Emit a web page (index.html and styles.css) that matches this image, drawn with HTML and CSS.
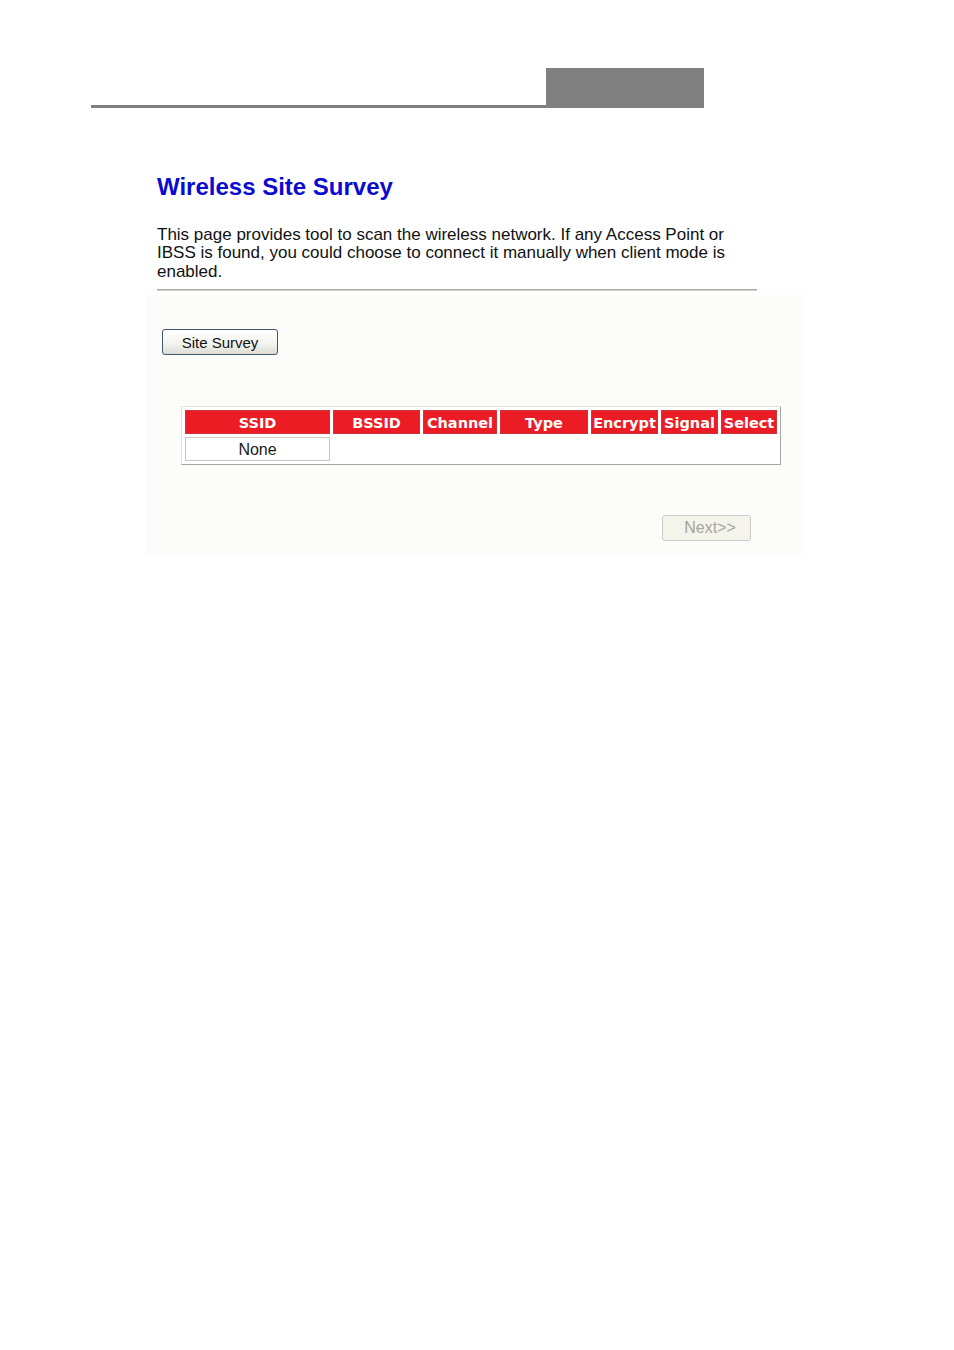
FILE: index.html
```html
<!DOCTYPE html>
<html lang="en">
<head>
<meta charset="utf-8">
<title>Wireless Site Survey</title>
<link rel="stylesheet" href="styles.css">
</head>
<body>
<header class="topbar">
  <div class="topbar-line"></div>
  <div class="topbar-box"></div>
</header>
<main class="page">
  <section class="intro">
    <h1 class="title">Wireless Site Survey</h1>
    <p class="desc">This page provides tool to scan the wireless network. If any Access Point or IBSS is found, you could choose to connect it manually when client mode is enabled.</p>
    <div class="rule"></div>
  </section>
  <form class="panel">
    <button type="button" class="btn-survey">Site Survey</button>
    <table class="survey">
      <thead>
        <tr>
          <th class="c-ssid">SSID</th>
          <th class="c-bssid">BSSID</th>
          <th class="c-channel">Channel</th>
          <th class="c-type">Type</th>
          <th class="c-encrypt">Encrypt</th>
          <th class="c-signal">Signal</th>
          <th class="c-select">Select</th>
        </tr>
      </thead>
      <tbody>
        <tr>
          <td class="none">None</td>
          <td class="empty" colspan="6"></td>
        </tr>
      </tbody>
    </table>
    <div class="actions">
      <button type="button" class="btn-next" disabled>Next&gt;&gt;</button>
    </div>
  </form>
</main>
</body>
</html>
```
FILE: styles.css
```css
html, body {
  margin: 0;
  padding: 0;
  background: #ffffff;
}
body {
  font-family: "Liberation Sans", Arial, sans-serif;
  color: #111111;
}
.topbar {
  display: flex;
  align-items: flex-end;
  margin: 68px 0 0 91px;
}
.topbar-line {
  width: 455px;
  height: 3px;
  background: #808080;
}
.topbar-box {
  width: 158px;
  height: 40px;
  background: #808080;
}
.page {
  margin-left: 146px;
  width: 657px;
}
.intro {
  padding-left: 11px;
}
.title {
  margin: 65px 0 0 0;
  font-family: "Liberation Sans", Arial, sans-serif;
  font-weight: bold;
  font-size: 24px;
  line-height: 28px;
  color: #0a0ad0;
}
.desc {
  margin: 25px 0 0 0;
  width: 600px;
  font-size: 17px;
  line-height: 18.4px;
  color: #111111;
}
.rule {
  margin-top: 8px;
  width: 600px;
  height: 1px;
  border-top: 1px solid #a8a8a0;
  background: #d4d4cc;
}
.panel {
  margin-top: 4px;
  padding: 34px 52px 13px 16px;
  background: #fcfcfa;
  display: flex;
  flex-direction: column;
  align-items: flex-start;
}
.btn-survey {
  box-sizing: border-box;
  width: 116px;
  height: 26px;
  padding: 0;
  border: 1px solid #3e5873;
  border-radius: 3px;
  background: linear-gradient(#ffffff, #f2f2ee 60%, #dcdcd4);
  font-family: "Liberation Sans", Arial, sans-serif;
  font-size: 15px;
  color: #111111;
}
.survey {
  margin: 51px 0 0 19px;
  width: 600px;
  border-collapse: separate;
  border-spacing: 3px;
  border: 1px solid;
  border-color: #e4e4dc #a8a8a0 #a8a8a0 #e4e4dc;
  background: #ffffff;
  table-layout: fixed;
}
.survey th {
  box-sizing: border-box;
  height: 24px;
  padding: 1px 0 0 0;
  background: #ec1c24;
  border: 1px solid #d0353a;
  color: #ffffff;
  font-family: "DejaVu Sans", Verdana, sans-serif;
  font-weight: bold;
  font-size: 14.5px;
  text-align: center;
  white-space: nowrap;
  overflow: hidden;
}
.c-ssid { width: 145px; }
.c-bssid { width: 87px; }
.c-channel { width: 74px; }
.c-type { width: 88px; }
.c-encrypt { width: 67px; }
.c-signal { width: 57px; }
.c-select { width: 56px; }
.survey td {
  box-sizing: border-box;
  height: 24px;
  padding: 1px 0 0 0;
}
.none {
  background: #ffffff;
  border: 1px solid #c8c8c0;
  font-size: 16px;
  color: #1a1a1a;
  text-align: center;
  padding-right: 4px;
}
.actions {
  align-self: stretch;
  display: flex;
  justify-content: flex-end;
  margin-top: 50px;
}
.btn-next {
  box-sizing: border-box;
  width: 89px;
  height: 26px;
  padding: 0 0 0 7px;
  border: 1px solid #cacabe;
  border-radius: 3px;
  background: #f4f4ec;
  font-family: "Liberation Sans", Arial, sans-serif;
  font-size: 16px;
  color: #a4a49c;
}
```
